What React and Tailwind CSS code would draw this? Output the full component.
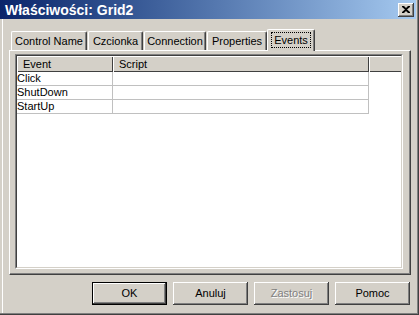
import React from 'react';

const tabs = [
  { label: 'Control Name', w: 'w-[76px]', ml: 'ml-[2px]' },
  { label: 'Czcionka', w: 'w-[55px]', ml: 'ml-px' },
  { label: 'Connection', w: 'w-[62px]', ml: 'ml-px' },
  { label: 'Properties', w: 'w-[60px]', ml: 'ml-px' },
];

const events = ['Click', 'ShutDown', 'StartUp'];

const raised =
  'bg-[#D4D0C8] shadow-[inset_-1px_-1px_#404040,inset_1px_1px_#fff,inset_-2px_-2px_#808080]';

const Button = ({ children, isDefault, disabled }) => (
  <div
    className={`w-[75px] h-[23px] ${isDefault ? 'border border-black' : ''}`}
  >
    <div
      className={`w-full h-full flex items-center justify-center ${raised} ${
        disabled ? 'text-[#808080] [text-shadow:1px_1px_0_#fff]' : 'text-black'
      }`}
    >
      {children}
    </div>
  </div>
);

export default function App() {
  return (
    <div className="w-[419px] h-[315px] bg-[#D4D0C8] flex flex-col text-[11px] font-['Liberation_Sans',Arial,sans-serif] text-black shadow-[inset_-1px_-1px_#404040,inset_-2px_-2px_#808080,inset_2px_0_#D4D0C8,inset_3px_0_#fff] overflow-hidden">
      {/* Title bar */}
      <div className="h-[19px] mr-[3px] flex items-center justify-between pl-[5px] pr-[2px] bg-gradient-to-r from-[#0A246A] to-[#A6CAF0]">
        <span className="text-white font-bold text-[14px] leading-none">Właściwości: Grid2</span>
        <div className={`w-[16px] h-[14px] flex items-center justify-center ${raised}`}>
          <svg width="8" height="7" viewBox="0 0 8 7">
            <path d="M0 0h2l2 2 2-2h2v1L5 3.5 8 6v1H6L4 5 2 7H0V6l3-2.5L0 1z" fill="#000" />
          </svg>
        </div>
      </div>

      {/* Tabs */}
      <div className="ml-[9px] mt-[10px] h-[21px] flex items-end">
        {tabs.map((t) => (
          <div
            key={t.label}
            className={`${t.w} ${t.ml} h-[19px] flex items-center justify-center border-t border-l border-white border-r border-r-[#404040] rounded-t-[2px] shadow-[inset_-1px_0_#808080]`}
          >
            {t.label}
          </div>
        ))}
        <div className="w-[48px] h-[22px] -mb-px relative z-10 bg-[#D4D0C8] flex items-start justify-center pt-[2px] border-t border-l border-white border-r border-r-[#404040] rounded-t-[2px] shadow-[inset_-1px_0_#808080]">
          <span className="px-[2px] leading-[14px] border border-dotted border-black">Events</span>
        </div>
      </div>

      {/* Panel */}
      <div className="ml-[9px] w-[402px] h-[225px] border-t border-l border-white border-r border-b border-r-[#404040] border-b-[#404040] shadow-[inset_-1px_-1px_#808080]">
        <div className="ml-[5px] mt-[3px] w-[388px] h-[215px] bg-white border-t border-l border-[#808080] border-r border-b border-r-white border-b-white">
          <div className="w-full h-full border-t border-l border-[#404040] border-r border-b border-r-[#D4D0C8] border-b-[#D4D0C8]">
            {/* Header */}
            <div className="flex h-[16px] bg-[#D4D0C8]">
              <div className="w-[96px] h-full flex items-center pl-[6px] shadow-[inset_1px_1px_#fff,inset_-1px_-1px_#404040]">
                Event
              </div>
              <div className="w-[256px] h-full flex items-center pl-[6px] shadow-[inset_1px_1px_#fff,inset_-1px_-1px_#404040]">
                Script
              </div>
              <div className="flex-1 h-full shadow-[inset_1px_1px_#fff,inset_0_-1px_#404040]" />
            </div>
            {/* Rows */}
            {events.map((e) => (
              <div key={e} className="flex h-[14px]">
                <div className="w-[96px] h-full flex items-center border-r border-b border-[#C0C0C0] leading-none">
                  {e}
                </div>
                <div className="w-[256px] h-full border-r border-b border-[#C0C0C0]" />
              </div>
            ))}
          </div>
        </div>
      </div>

      {/* Buttons */}
      <div className="mt-[7px] ml-[92px] flex gap-[6px]">
        <Button isDefault>OK</Button>
        <Button>Anuluj</Button>
        <Button disabled>Zastosuj</Button>
        <Button>Pomoc</Button>
      </div>
    </div>
  );
}
